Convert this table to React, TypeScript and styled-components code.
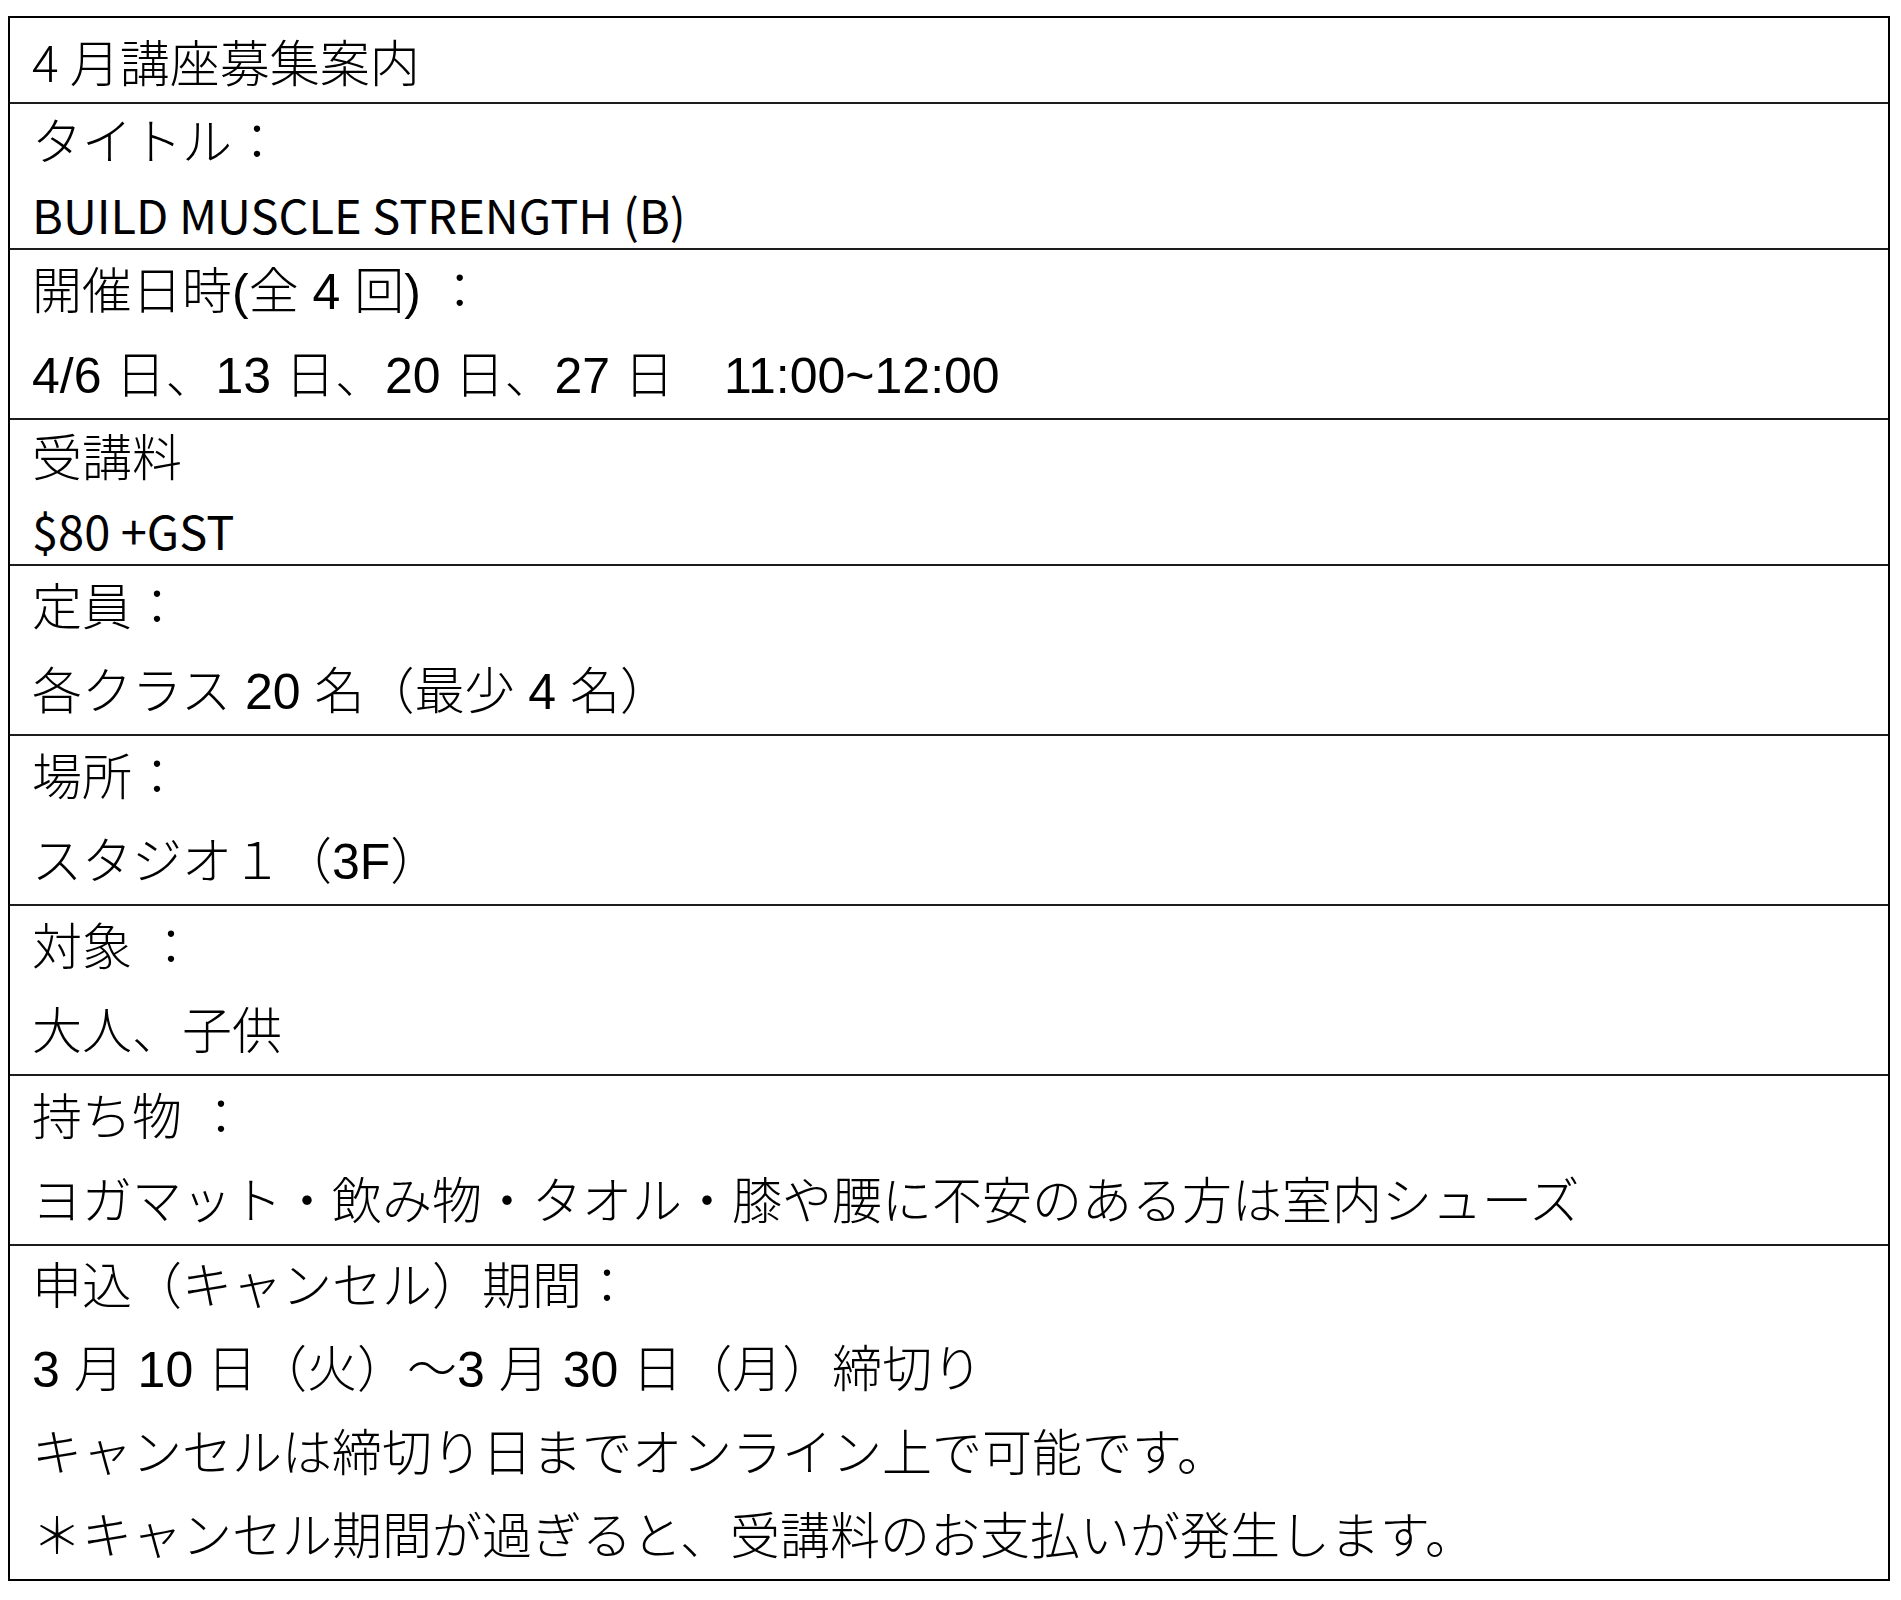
import React from "react";
import styled, { createGlobalStyle } from "styled-components";

const GlobalStyle = createGlobalStyle`
  html, body {
    margin: 0;
    padding: 0;
    background: #ffffff;
  }
`;

// arial: Arial-width latin with gothic CJK fallback
// gothic: light gothic throughout
// plain: regular-weight gothic latin (the narrower lines)
type Face = "arial" | "gothic" | "plain";

interface LineData {
  text: string;
  face?: Face;
}

interface RowData {
  lines: LineData[];
  lineHeight: number;
  padTop?: number;
}

const rows: RowData[] = [
  { lines: [{ text: "4 月講座募集案内", face: "gothic" }], lineHeight: 84 },
  {
    lines: [{ text: "タイトル：" }, { text: "BUILD MUSCLE STRENGTH (B)", face: "plain" }],
    lineHeight: 69.5,
    padTop: 5,
  },
  {
    lines: [{ text: "開催日時(全 4 回) ：" }, { text: "4/6 日、13 日、20 日、27 日　11:00~12:00" }],
    lineHeight: 84,
  },
  { lines: [{ text: "受講料" }, { text: "$80 +GST", face: "plain" }], lineHeight: 69.5, padTop: 5 },
  { lines: [{ text: "定員：" }, { text: "各クラス 20 名（最少 4 名）" }], lineHeight: 84 },
  { lines: [{ text: "場所：" }, { text: "スタジオ１（3F）" }], lineHeight: 84 },
  { lines: [{ text: "対象 ：" }, { text: "大人、子供" }], lineHeight: 84 },
  {
    lines: [{ text: "持ち物 ：" }, { text: "ヨガマット・飲み物・タオル・膝や腰に不安のある方は室内シューズ" }],
    lineHeight: 84,
  },
  {
    lines: [
      { text: "申込（キャンセル）期間：" },
      { text: "3 月 10 日（火）～3 月 30 日（月）締切り" },
      { text: "キャンセルは締切り日までオンライン上で可能です。" },
      { text: "＊キャンセル期間が過ぎると、受講料のお支払いが発生します。" },
    ],
    lineHeight: 83.25,
  },
];

export default function App() {
  return (
    <>
      <GlobalStyle />
      <Page>
        <Sheet>
          {rows.map((row, i) => (
            <Row key={i} $padTop={row.padTop ?? 0}>
              {row.lines.map((line, j) => (
                <Line key={j} $face={line.face ?? "arial"} $height={row.lineHeight}>
                  {line.text}
                </Line>
              ))}
            </Row>
          ))}
        </Sheet>
      </Page>
    </>
  );
}

const Page = styled.main`
  padding: 16px 0 20px 8px;
`;

const Sheet = styled.section`
  width: 1882px;
  box-sizing: border-box;
  border: 2px solid #000000;
  display: flex;
  flex-direction: column;
  background: #ffffff;
`;

const Row = styled.div<{ $padTop: number }>`
  padding: ${(p) => p.$padTop}px 0 0 22px;
  border-bottom: 2px solid #1c1c1c;

  &:last-child {
    border-bottom: none;
  }
`;

const Line = styled.div<{ $face: Face; $height: number }>`
  height: ${(p) => p.$height}px;
  line-height: ${(p) => p.$height}px;
  font-size: ${(p) => (p.$face === "plain" ? 47 : 50)}px;
  color: #000000;
  white-space: pre;
  font-weight: ${(p) => (p.$face === "plain" ? 400 : 300)};
  font-family: ${(p) =>
    p.$face === "arial"
      ? `"Liberation Sans", "Noto Sans CJK JP", sans-serif`
      : `"Noto Sans CJK JP", "Noto Sans", sans-serif`};
`;
